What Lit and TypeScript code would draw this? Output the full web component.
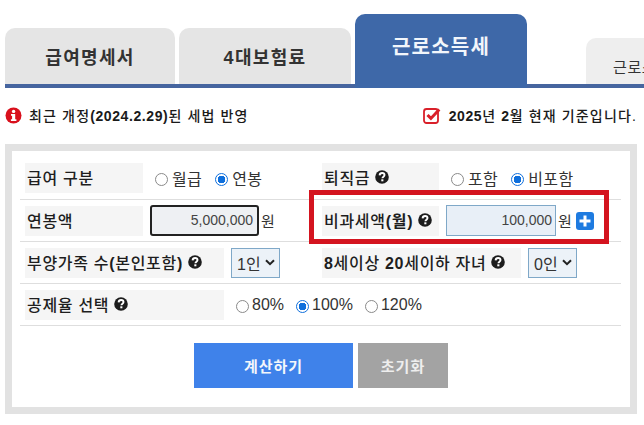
import { LitElement, html, css } from "lit";
import { customElement } from "lit/decorators.js";

const help = html`<svg class="help" viewBox="0 0 14 14"><circle cx="7" cy="7" r="6.8" fill="#1c1c1c"/><path d="M4.6 5.4C4.7 3.9 5.8 3 7.1 3c1.4 0 2.4.8 2.4 2 0 1.7-2.1 1.7-2.1 3.3" fill="none" stroke="#fff" stroke-width="1.9"/><rect x="6.3" y="9.3" width="2.1" height="2" fill="#fff"/></svg>`;

const radio = (on: boolean) => html`<span class="radio ${on ? "on" : ""}"></span>`;
const chevron = html`<svg width="10" height="7" viewBox="0 0 10 7"><path d="M1 1.2l4 4 4-4" fill="none" stroke="#222" stroke-width="2"/></svg>`;

@customElement("app-root")
export class AppRoot extends LitElement {
  static styles = css`
    :host { display: block; width: 644px; height: 425px; overflow: hidden; background: #fff;
      font-family: "Liberation Sans", "Noto Sans CJK KR", sans-serif; color: #222; }
    .tabs { display: flex; align-items: flex-end; margin-left: 5px; border-bottom: 4px solid #46659f; padding-top: 14px; height: 70px; }
    .tab { width: 170px; height: 56px; margin-right: 4px; background: #e5e5e5; border-radius: 10px 10px 0 0; display: flex; align-items: center; justify-content: center; font-size: 18px; letter-spacing: 1.3px; font-weight: 700; color: #333; }
    .tab.second { width: 172px; }
    .tab.active { width: 172px; height: 74px; margin-bottom: -4px; background: #3e68a8; color: #f2f6fb; font-size: 20px; letter-spacing: 1.2px; padding-bottom: 12px; box-sizing: border-box; margin-right: 59px; }
    .tab.small { width: 80px; height: 46px; margin: 0 -30px 0 0; background: #eee; font-size: 15px; letter-spacing: .6px; font-weight: 400; justify-content: flex-start; padding: 10px 0 0 27px; box-sizing: border-box; flex: none; white-space: nowrap; overflow: hidden; }
    .notice { display: flex; justify-content: space-between; align-items: center; height: 24px; margin: 15px 7px 0 5px; font-size: 14px; letter-spacing: 1.15px; font-weight: 500; color: #1a1a1a; white-space: nowrap; }
    .notice .line { display: flex; align-items: center; }
    .notice b { font-weight: 700; letter-spacing: .6px; }
    .notice svg { flex: none; margin-right: 8px; }
    .panel { position: relative; width: 632px; height: 270px; margin: 17px 0 0 5px; box-sizing: border-box; border: 7px solid #e2e2e2; padding: 6px 9px 0 8px; }
    .row { display: flex; align-items: center; border-bottom: 1px solid #dedede; height: 42px; box-sizing: border-box; font-size: 16px; }
    .row.first { height: 43px; padding-bottom: 1px; }
    .cell { display: flex; align-items: center; }
    .c1 { width: 302px; flex: none; }
    .label { display: flex; align-items: center; gap: 5px; box-sizing: border-box; height: 30px; background: #f5f5f5; padding: 0 0 2px 2px; font-size: 16px; letter-spacing: .7px; font-weight: 500; color: #1e1e1e; white-space: nowrap; width: 118px; flex: none; margin-left: 5px; }
    .label.wide { width: 199px; }
    .label.right { margin-left: 0; padding-left: 2px; width: 117px; }
    .label.longer { width: 199px; }
    .label b { font-weight: 700; }
    .help { width: 14px; height: 14px; flex: none; }
    .radios { display: flex; align-items: center; color: #333; font-size: 16px; letter-spacing: .4px; margin-left: 12px; }
    .radio { display: inline-block; width: 13px; height: 13px; box-sizing: border-box; border: 1px solid #8a8a8a; border-radius: 50%; margin: 4px 4px 0 0; background: #fff; flex: none; }
    .radio.on { border: 1.5px solid #0f6fdc; background: radial-gradient(circle, #0f6fdc 0 3.6px, #fff 4px); }
    .opt { display: flex; align-items: center; margin-right: 13px; }
    .radios.pct { letter-spacing: 0; }
    .pct .radio { margin-right: 3px; }
    .pct .opt { margin-right: 12px; }
    .input { box-sizing: border-box; height: 31px; background: #eef0f3; border: 2px solid #222; border-radius: 3px; font-size: 14px; color: #444; text-align: right; padding: 0 4px 0 0; line-height: 27px; width: 109px; margin-left: 7px; }
    .input.blue { background: #e8eff7; border: 1px solid #7fa8c8; border-radius: 0; width: 110px; line-height: 29px; padding-right: 3px; }
    .unit { margin-left: 2px; font-size: 15px; color: #333; }
    .select { display: flex; align-items: center; justify-content: space-between; box-sizing: border-box; width: 49px; height: 30px; margin-left: 7px; padding: 0 4px 0 5px; background: #ecf2f8; border: 1px solid #7fa8c8; font-size: 16px; color: #333; }
    .plus { width: 18px; height: 18px; border-radius: 3px; margin-left: 4px; background: #1e7be0; flex: none; }
    .plus svg { display: block; }
    .buttons { display: flex; gap: 5px; margin: 17px 0 0 174px; }
    .btn { height: 45px; display: flex; align-items: center; justify-content: center; font-size: 15px; letter-spacing: 1px; font-weight: 700; color: #f3f6fb; }
    .calc { width: 159px; background: #3f82ea; }
    .reset { width: 90px; background: #a3a3a3; color: #eee; }
    .redbox { position: absolute; left: 297px; top: 39px; width: 300px; height: 54px; box-sizing: border-box; border: 5px solid #d4141f; pointer-events: none; }
  `;

  render() {
    return html`
      <div class="tabs">
        <div class="tab">급여명세서</div>
        <div class="tab second">4대보험료</div>
        <div class="tab active">근로소득세</div>
        <div class="tab small">근로소득</div>
      </div>
      <div class="notice">
        <div class="line">
          <svg width="17" height="17" viewBox="0 0 17 17" style="margin-right:7px"><circle cx="8.5" cy="8.5" r="8" fill="#d9101c"/><circle cx="8.6" cy="4.4" r="1.7" fill="#fff"/><path d="M6 7h4.2v5.2h1.2V14H5.9v-1.8h1.2V8.8H6z" fill="#fff"/></svg>
          <span>최근 개정<b>(2024.2.29)</b>된 세법 반영</span>
        </div>
        <div class="line">
          <svg width="18" height="18" viewBox="0 0 18 18"><rect x="1" y="3" width="14" height="14" rx="2.5" fill="#fff" stroke="#d9202a" stroke-width="1.8"/><path d="M4.5 9l3.4 3.4 8.4-9" fill="none" stroke="#d9202a" stroke-width="3"/></svg>
          <span><b>2025</b>년 <b>2</b>월 현재 기준입니다.</span>
        </div>
      </div>
      <div class="panel">
        <div class="row first">
          <div class="cell c1">
            <div class="label"><span>급여 구분</span></div>
            <div class="radios">
              <span class="opt">${radio(false)}월급</span><span class="opt">${radio(true)}연봉</span>
            </div>
          </div>
          <div class="cell">
            <div class="label right"><span>퇴직금</span> ${help}</div>
            <div class="radios">
              <span class="opt">${radio(false)}포함</span><span class="opt">${radio(true)}비포함</span>
            </div>
          </div>
        </div>
        <div class="row">
          <div class="cell c1">
            <div class="label"><span>연봉액</span></div>
            <div class="input">5,000,000</div><span class="unit">원</span>
          </div>
          <div class="cell">
            <div class="label right"><span>비과세액<b>(월)</b></span> ${help}</div>
            <div class="input blue">100,000</div><span class="unit">원</span>
            <span class="plus"><svg width="18" height="18" viewBox="0 0 18 18"><path d="M7.5 3.5h3v4h4v3h-4v4h-3v-4h-4v-3h4z" fill="#fff"/></svg></span>
          </div>
        </div>
        <div class="row">
          <div class="cell c1">
            <div class="label wide"><span>부양가족 수<b>(</b>본인포함<b>)</b></span> ${help}</div>
            <div class="select">1인 ${chevron}</div>
          </div>
          <div class="cell">
            <div class="label right longer"><span><b>8</b>세이상 <b>20</b>세이하 자녀</span> ${help}</div>
            <div class="select">0인 ${chevron}</div>
          </div>
        </div>
        <div class="row">
          <div class="cell c1">
            <div class="label wide"><span>공제율 선택</span> ${help}</div>
            <div class="radios pct">
              <span class="opt">${radio(false)}80%</span><span class="opt">${radio(true)}100%</span><span class="opt">${radio(false)}120%</span>
            </div>
          </div>
        </div>
        <div class="buttons">
          <div class="btn calc">계산하기</div>
          <div class="btn reset">초기화</div>
        </div>
        <div class="redbox"></div>
      </div>
    `;
  }
}
